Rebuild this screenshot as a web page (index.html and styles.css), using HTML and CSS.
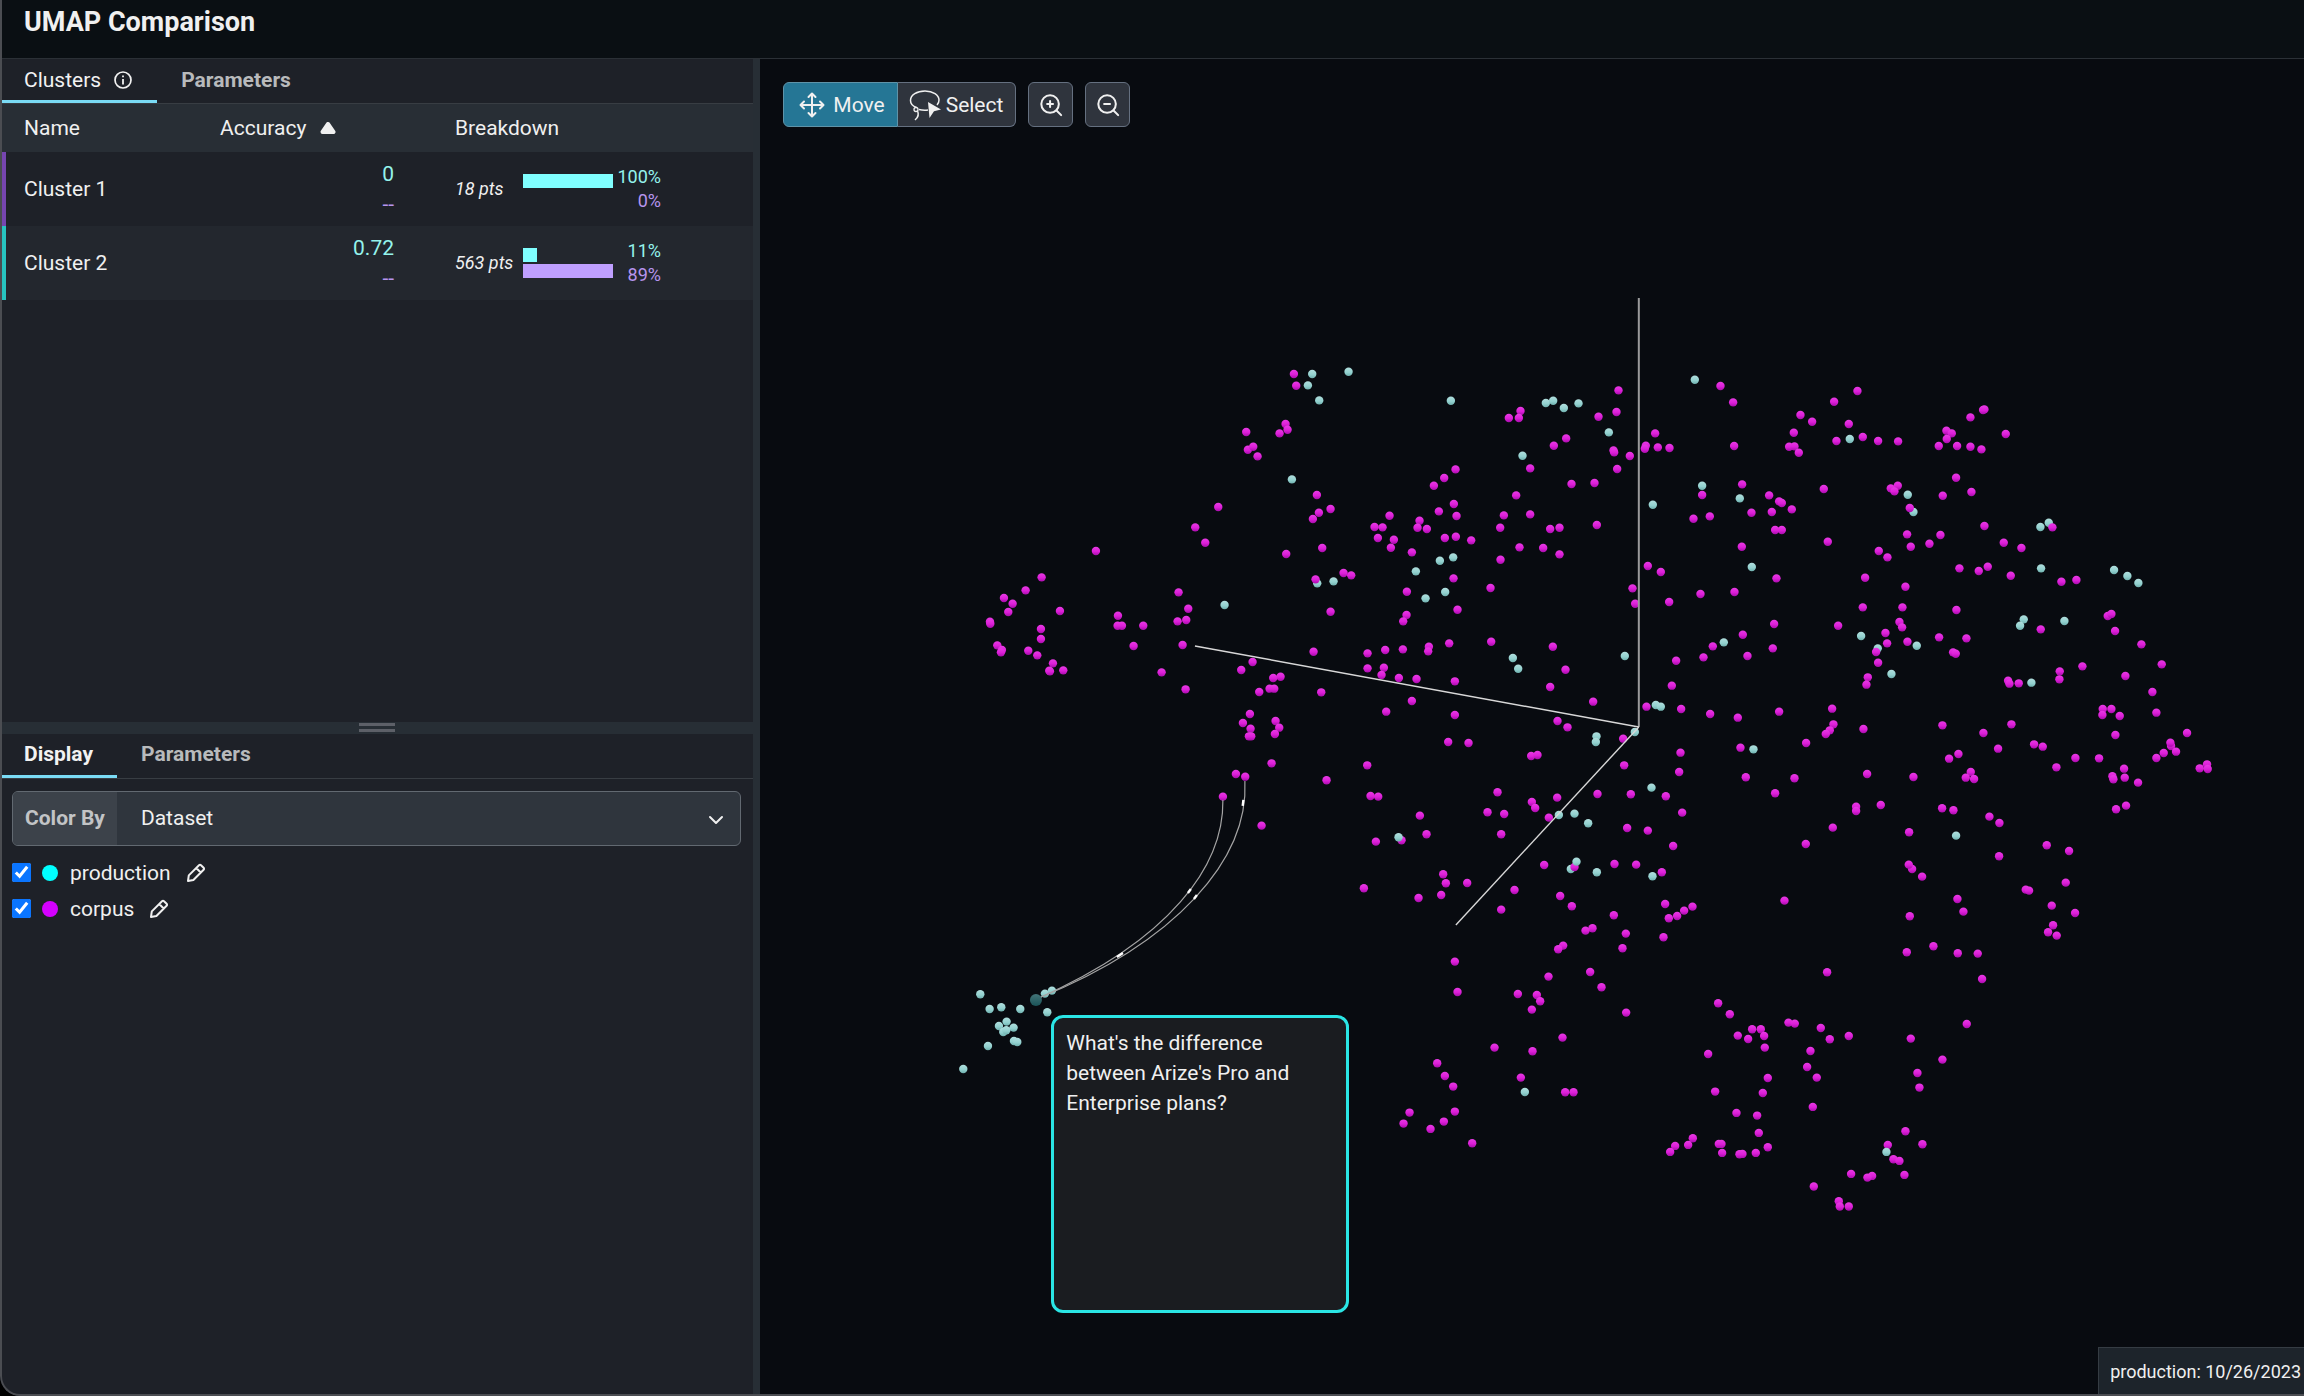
FILE: index.html
```html
<!DOCTYPE html>
<html lang="en">
<head>
<meta charset="utf-8">
<title>UMAP Comparison</title>
<link rel="stylesheet" href="styles.css">
</head>
<body>
<div class="app">
  <header class="header"><h1 class="title">UMAP Comparison</h1></header>
  <main class="main">
    <aside class="side">
      <section class="panel">
        <div class="tabs" role="tablist">
          <button class="tab tab-light tab-on" role="tab" aria-selected="true">Clusters
            <svg class="info" viewBox="0 0 20 20" aria-hidden="true"><circle cx="10" cy="10" r="8" fill="none" stroke="currentColor" stroke-width="1.7"/><path d="M10 9v5.4M10 5.4v1.9" stroke="currentColor" stroke-width="1.8"/></svg>
          </button>
          <button class="tab" role="tab" aria-selected="false">Parameters</button>
        </div>
        <table class="clusters">
          <colgroup><col class="col-name"><col class="col-acc"><col></colgroup>
          <thead>
            <tr>
              <th>Name</th>
              <th><span class="sort">Accuracy <svg class="caret" viewBox="0 0 16 12" aria-hidden="true"><path d="M8 2 13.500 10H2.500Z" fill="currentColor" stroke="currentColor" stroke-width="4" stroke-linejoin="round"/></svg></span></th>
              <th>Breakdown</th>
            </tr>
          </thead>
          <tbody>
            <tr class="row-purple">
              <td>Cluster 1</td>
              <td class="acc"><div class="prod">0</div><div class="corp">--</div></td>
              <td><div class="breakdown"><em class="pts">18 pts</em><div class="bars"><div class="bar bar-prod" style="width:100%"></div><div class="bar bar-corp" style="width:0%"></div></div><div class="pct"><div class="prod">100%</div><div class="corp">0%</div></div></div></td>
            </tr>
            <tr class="row-teal">
              <td>Cluster 2</td>
              <td class="acc"><div class="prod">0.72</div><div class="corp">--</div></td>
              <td><div class="breakdown"><em class="pts">563 pts</em><div class="bars"><div class="bar bar-prod" style="width:16%"></div><div class="bar bar-corp" style="width:100%"></div></div><div class="pct"><div class="prod">11%</div><div class="corp">89%</div></div></div></td>
            </tr>
          </tbody>
        </table>
      </section>
      <div class="splitter" role="separator"><span class="grip"></span></div>
      <section class="panel">
        <div class="tabs" role="tablist">
          <button class="tab tab-on" role="tab" aria-selected="true">Display</button>
          <button class="tab" role="tab" aria-selected="false">Parameters</button>
        </div>
        <div class="field">
          <label class="field-label" for="color-by">Color By</label>
          <select class="field-select" id="color-by"><option>Dataset</option></select>
          <svg class="chevron" viewBox="0 0 16 10" aria-hidden="true"><path d="m2 2 6 6 6-6" fill="none" stroke="currentColor" stroke-width="2" stroke-linecap="round" stroke-linejoin="round"/></svg>
        </div>
        <div class="legend">
          <div class="legend-item">
            <input class="check" type="checkbox" id="ds-prod" checked>
            <span class="swatch swatch-prod"></span>
            <label for="ds-prod">production</label>
            <button class="edit" aria-label="Edit production color"><svg viewBox="0 0 20 20"><path d="M2 18l.8-5.6L13 2.2c.6-.6 1.4-.6 2 0l2.600 2.600c.6.6.6 1.400 0 2L7.400 17zM10.200 5l4.800 4.800" fill="none" stroke="currentColor" stroke-width="2" stroke-linejoin="round"/></svg></button>
          </div>
          <div class="legend-item">
            <input class="check" type="checkbox" id="ds-corpus" checked>
            <span class="swatch swatch-corp"></span>
            <label for="ds-corpus">corpus</label>
            <button class="edit" aria-label="Edit corpus color"><svg viewBox="0 0 20 20"><path d="M2 18l.8-5.6L13 2.2c.6-.6 1.4-.6 2 0l2.600 2.600c.6.6.6 1.400 0 2L7.400 17zM10.200 5l4.800 4.800" fill="none" stroke="currentColor" stroke-width="2" stroke-linejoin="round"/></svg></button>
          </div>
        </div>
      </section>
    </aside>
    <section class="plot">
      <svg class="canvas" viewBox="760 59 1544 1337" role="img" aria-label="UMAP point cloud">
        <defs>
          <linearGradient id="g-corp" x1="0" y1="0" x2="0" y2="1"><stop offset="0" stop-color="#e83ae4"/><stop offset=".55" stop-color="#dc1fd8"/><stop offset="1" stop-color="#a80cab"/></linearGradient>
          <linearGradient id="g-prod" x1="0" y1="0" x2="0" y2="1"><stop offset="0" stop-color="#b0dedd"/><stop offset=".6" stop-color="#92d1cf"/><stop offset="1" stop-color="#6fb0ae"/></linearGradient>
          <linearGradient id="g-sel" x1="0" y1="0" x2="0" y2="1"><stop offset="0" stop-color="#447579"/><stop offset="1" stop-color="#1a5458"/></linearGradient>
        </defs>
        <g id="points"></g>
        <g class="axes">
          <path class="axis-y" d="M1639 298V727"/>
          <path d="M1195 646 1639 727"/>
          <path d="M1639 727 1456 925"/>
        </g>
        <g class="links">
          <path d="M1245 781C1249 860 1176 942 1039 998"/>
          <path d="M1223 800C1224 866 1170 940 1039 998"/>
        </g>
        <g class="arrows">
          <path d="M1243.500 800 1242.800 806M1191 889 1188 893M1197 895 1194 899M1123 953 1117 957"/>
        </g>
        <circle cx="1036" cy="1000" r="6" fill="url(#g-sel)"/>
      </svg>
      <div class="toolbar">
        <div class="modes">
          <button class="tool tool-on"><svg class="ico-move" viewBox="0 0 26 26" aria-hidden="true"><path d="M13 2v22M2 13h22M9.500 5 13 1.500 16.500 5M9.500 21l3.500 3.500 3.500-3.500M5 9.500 1.500 13 5 16.500M21 9.500l3.500 3.500-3.500 3.500" fill="none" stroke="currentColor" stroke-width="2" stroke-linecap="round" stroke-linejoin="round"/></svg>Move</button>
          <button class="tool"><svg class="ico-lasso" viewBox="0 0 32 32" aria-hidden="true"><path d="M7.500 18.500C3.500 17 1.500 14 1.500 11.500 1.500 6 8 2 16 2s14 4 14 9c0 2-.8 3.800-2 5M10 20.500c3 .8 6 1 9 .5" fill="none" stroke="currentColor" stroke-width="1.500"/><circle cx="7" cy="20.500" r="2" fill="none" stroke="currentColor" stroke-width="1.300"/><path d="M8.500 22c1.500 3 .5 6.500-2.500 9" fill="none" stroke="currentColor" stroke-width="1.500"/><path d="M19 13l13 7.500-7 1.800-4.500 6.700z" fill="currentColor"/></svg>Select</button>
        </div>
        <button class="tool-sq" aria-label="Zoom in"><svg viewBox="0 0 26 26"><circle cx="12" cy="12" r="9.500" fill="none" stroke="currentColor" stroke-width="2.200"/><path d="M19 19l5 5M12 8.800v6.400M8.800 12h6.400" stroke="currentColor" stroke-width="2.200" stroke-linecap="round"/></svg></button>
        <button class="tool-sq" aria-label="Zoom out"><svg viewBox="0 0 26 26"><circle cx="12" cy="12" r="9.500" fill="none" stroke="currentColor" stroke-width="2.200"/><path d="M19 19l5 5M8.800 12h6.400" stroke="currentColor" stroke-width="2.200" stroke-linecap="round"/></svg></button>
      </div>
      <div class="tooltip" role="tooltip">What's the difference between Arize's Pro and Enterprise plans?</div>
      <div class="stamp">production: 10/26/2023</div>
    </section>
  </main>
</div>
<script src="points.js"></script>
</body>
</html>
```
FILE: points.js
```js
// Projected points, grouped by tile. Each tile has an origin in scene units;
// its points are stored in thirds of a unit from that origin.
const tiles = [
  { origin: [940, 340],
    prod: "1117,102 1104,136 1138,181 1056,418 1132,730 854,795",
    corpus: "1062,102 1069,137 1037,252 1043,269 1019,280 919,276 924,329 940,320 953,349 1131,465 1137,518 1119,537 1172,507 835,501 766,562 796,608 468,633 1147,624 1039,642 305,712 257,751 192,774 218,791 205,816 150,845 151,851 360,813 303,867 303,897 172,916 186,930 183,937 265,932 292,946 339,970 328,992 330,994 370,991 534,827 533,857 546,857 610,857 581,918 716,757 745,806 739,840 713,844 728,915 665,997 737,1048 1127,718 1172,815 1121,935 938,966 904,990 1000,1014 1022,1010 958,1056 989,1046 1003,1046 1144,1057" },
  { origin: [1330, 340],
    prod: "56,95 363,182 648,189 670,182 702,204 746,190 837,277 578,347 370,652 330,662 258,694 346,756 287,775 11,724 1095,119 1117,437 1230,475 969,494 1266,681 1182,907 885,948 549,954 565,986 978,1095 993,1100 915,1176 800,1189 798,1206 1271,1228 965,1343 687,1425 734,1421 775,1450",
    corpus: "866,151 860,216 806,230 572,213 567,234 537,234 709,295 672,317 851,331 853,337 900,348 862,387 601,385 377,388 343,414 312,437 725,432 794,429 559,466 372,492 327,514 380,528 179,527 269,542 263,563 291,567 134,561 158,562 144,594 192,599 183,623 345,594 378,590 424,601 246,637 522,526 511,563 601,523 661,567 689,563 801,555 569,622 640,624 689,643 512,659 371,715 482,744 231,755 41,699 64,706 383,809 230,825 220,844 908,745 916,791 954,678 993,696 1018,786 1112,762 1214,756 1236,620 1117,465 1091,536 1140,529 1237,433 1265,518 976,280 948,317 945,326 984,322 1019,324 1213,318 1172,138 1210,187 358,910 484,905 297,920 295,934 166,930 219,928 113,940 113,985 162,983 155,1005 207,1014 260,1017 375,1024 669,920 707,989 661,1041 790,1085 246,1083 169,1115 375,1125 683,1143 713,1162 355,1206 416,1209 604,1248 623,1245 880,1196 883,1276 112,1276 122,1368 145,1370 270,1427 290,1483 503,1357 473,1417 523,1422 514,1483 606,1386 616,1404 657,1433 682,1373 803,1362 903,1363 1008,1369 892,1464 954,1472 1057,1418 1048,1296 1052,1238 950,1100 1054,1107 1141,1122 1224,1133 1232,1223 1248,1312 1239,884 1149,919 1121,952 1039,962 1026,1037 1253,948" },
  { origin: [1760, 340],
    prod: "270,297 444,464 461,516 842,561 867,548 844,685 1063,690 1103,708 1136,729 792,838 781,857 914,843 304,888 354,925 471,917 395,1002 815,1028 589,1487",
    corpus: "293,153 223,185 122,225 157,245 267,252 102,278 309,291 230,303 355,303 415,304 88,320 104,319 117,338 674,208 670,210 632,232 560,272 576,280 561,297 537,318 592,318 632,320 665,328 738,282 589,413 635,456 549,467 192,447 28,466 58,484 66,489 96,508 36,516 46,570 66,570 414,437 393,445 404,454 450,504 442,583 453,620 357,633 383,652 542,585 509,611 674,558 732,608 785,624 599,685 657,693 684,680 753,707 905,725 950,720 878,562 204,605 50,715 316,713 437,740 309,802 428,802 419,846 427,862 377,879 382,910 443,905 349,936 355,968 324,1012 320,1034 43,852 235,857 39,925 590,810 538,892 620,895 580,937 588,941 843,868 1044,828 1055,822 1066,873 1145,913 1206,973 1097,1008 1178,1056 1190,1118 968,979 900,994 899,1018 745,1022 749,1031 777,1030 1029,1107 1055,1107 1028,1125 1080,1128 1067,1185 1282,1179 1234,1218 1232,1208 1249,1235 1212,1239 1190,1254 1342,1273 1320,1285 1344,1287 58,1115 217,1106 221,1153 210,1171 198,1182 139,1209 311,1167 104,1315 46,1360 322,1302 461,1311 363,1395 289,1400 289,1413 219,1463 448,1477 548,1156 671,1179 755,1153 715,1226 596,1242 568,1256 633,1296 618,1313 643,1317 823,1213 849,1220 947,1254 890,1282 1018,1255 1093,1286 1058,1309 1061,1318 1095,1313 1135,1328 1099,1397 1069,1408 547,1405 581,1411 689,1430 719,1449" },
  { origin: [1160, 680],
    prod: "1233,567 1311,577 1478,589 1095,1236",
    corpus: "270,102 249,129 347,123 358,143 345,162 272,146 267,169 274,169 335,250 228,282 256,290 189,350 305,437 500,301 648,485 725,481 612,625 776,654 850,583 858,610 844,645 922,609 1064,630 1024,689 1153,555 1201,648 1236,679 1364,552 1429,554 1362,706 1298,745 1277,752 1398,761 1388,805 1210,797 1195,808 1291,876 1325,922 1166,890 1399,998 1074,942 1131,945 1141,964 1116,989 885,845 893,936 1208,1073 1118,1114 1004,1103 1083,1193 1216,1237 1241,1237 832,1150 855,1188 880,1220 885,1295 852,1325 812,1347 749,1298 731,1331 937,1390 1244,561",
    front: "1250,545 716,472" },
  { origin: [1660, 800],
    prod: "",
    corpus: "40,138 438,132 6,217 16,312 98,320 73,332 52,348 27,355 11,412 374,302 502,517 175,610 210,643 277,688 303,688 313,708 234,707 265,717 315,743 145,762 324,834 309,879 166,875 230,939 292,947 297,999 324,1042 288,1059 248,1062 239,1063 187,1059 177,1032 185,1032 99,1015 85,1035 46,1038 31,1056 386,668 405,671 483,684 567,708 510,718 452,753 442,801 471,833 459,921 757,207 747,194 787,230 750,349 741,457 821,439 894,460 954,461 967,537 893,297 911,335 921,672 753,716 848,779 773,819 779,863 1018,169 1161,136 1228,153 1218,248 1098,269 1108,272 1176,317 1246,339 1180,376 1165,397 1191,407 737,994 788,1033 684,1035 701,1078 719,1083 734,1125 574,1122 637,1128 623,1133 462,1160 537,1204 540,1220 567,1220",
    front: "680,1056" },
  { origin: [940, 980],
    prod: "121,43 149,87 184,82 241,87 315,41 336,32 322,97 200,125 177,138 221,143 190,156 199,151 144,198 222,183 232,186 70,267",
    corpus: "" }
];

const layer = document.getElementById("points");

function draw(list, origin, fill) {
  if (!list) return;
  for (const pair of list.split(" ")) {
    const [x, y] = pair.split(",").map(Number);
    const dot = document.createElementNS("http://www.w3.org/2000/svg", "circle");
    dot.setAttribute("cx", origin[0] + x / 3);
    dot.setAttribute("cy", origin[1] + y / 3);
    dot.setAttribute("r", 4.2);
    dot.setAttribute("fill", fill);
    layer.appendChild(dot);
  }
}

for (const t of tiles) draw(t.prod, t.origin, "url(#g-prod)");
for (const t of tiles) draw(t.corpus, t.origin, "url(#g-corp)");
for (const t of tiles) draw(t.front, t.origin, "url(#g-prod)");
```
FILE: styles.css
```css
* { box-sizing: border-box; }

body {
  margin: 0;
  background: #000;
  color: #f0f0f0;
  font-family: Roboto, "Liberation Sans", sans-serif;
  font-size: 21px;
  line-height: 24px;
}

button, select, input { font: inherit; color: inherit; margin: 0; }
button { background: none; border: 0; padding: 0; }
svg { display: block; flex: none; }

.app {
  position: relative;
  display: flex;
  flex-direction: column;
  min-height: 100vh;
  background: #080b10;
  border-bottom-left-radius: 20px;
  overflow: hidden;
}

/* window edge, drawn above the panels */
.app::after {
  content: "";
  position: absolute;
  inset: 0 -20px 0 0;
  border: solid #4b4d52;
  border-width: 0 0 2px 2px;
  border-bottom-left-radius: 20px;
  pointer-events: none;
}

.header {
  height: 59px;
  padding: 7px 24px;
  background: #0a0f13;
  border-bottom: 1px solid #2b3036;
}

.title { margin: 0; font-size: 27px; line-height: 30px; font-weight: 700; }

.main { flex: 1; display: flex; }

.side {
  width: 33%;
  display: flex;
  flex-direction: column;
  background: #1e2128;
  border-right: 7px solid #272e35;
}

.panel { flex: 1 1 0; }

.tabs { display: flex; height: 45px; border-bottom: 1px solid #383d43; }
.tab {
  display: flex;
  align-items: center;
  gap: 12px;
  height: 44px;
  padding: 0 24px;
  border-bottom: 3px solid transparent;
  font-weight: 700;
  color: #b8babc;
}
.tab-on { color: #f2f2f2; border-bottom-color: #7adbf5; }
.tab-light { font-weight: 400; }
.info { width: 20px; height: 20px; }

.clusters { width: 100%; border-collapse: separate; border-spacing: 0; table-layout: fixed; }
.col-name { width: 204px; }
.col-acc { width: 235px; }
.clusters th {
  height: 48px;
  padding: 0 16px;
  background: #282e35;
  font-weight: 400;
  text-align: left;
}
.clusters td { height: 74px; padding: 0 16px; }
.clusters th:first-child { padding-left: 24px; }
.clusters td:first-child { padding-left: 18px; border-left: 6px solid #7645b0; }
.clusters .row-teal td:first-child { border-left-color: #27c4c0; }
.row-teal { background: #23272e; }
.sort { display: flex; align-items: center; gap: 14px; }
.caret { width: 16px; height: 12px; }

.clusters .acc { padding-right: 45px; text-align: right; line-height: 30px; }
.prod { color: #95f3ec; }
.corp { color: #b795ee; }

.breakdown { display: flex; align-items: center; font-size: 18px; }
.pts { width: 68px; white-space: nowrap; }
.bars { width: 90px; display: flex; flex-direction: column; gap: 2px; }
.bar { height: 14px; }
.bar-prod { background: #80ffff; }
.bar-corp { background: #bf9fff; }
.pct { width: 48px; text-align: right; }

.splitter {
  display: flex;
  align-items: center;
  justify-content: center;
  height: 12px;
  background: #272e35;
}
.grip { width: 36px; height: 9px; border: solid #5d6068; border-width: 3px 0; }

.field {
  position: relative;
  display: flex;
  height: 55px;
  margin: 12px 12px 15px;
  border: 1px solid #626971;
  border-radius: 6px;
  background: #2f353d;
  overflow: hidden;
}
.field-label {
  display: flex;
  align-items: center;
  padding: 0 12px;
  background: #3c424a;
  color: #c2c4c6;
  font-weight: 700;
}
.field-select {
  flex: 1;
  appearance: none;
  padding: 0 24px;
  border: 0;
  background: transparent;
}
.chevron { position: absolute; right: 16px; top: 23px; width: 16px; height: 10px; }

.legend { display: flex; flex-direction: column; gap: 12px; padding: 0 12px; }
.legend-item { display: flex; align-items: center; height: 24px; }
.check { width: 19px; height: 19px; accent-color: #0a75ff; }
.swatch { width: 16px; height: 16px; margin: 0 12px 0 11px; border-radius: 50%; }
.swatch-prod { background: #00ffff; }
.swatch-corp { background: #d400ff; }
.edit { margin-left: 15px; }
.edit svg { width: 20px; height: 20px; }

.plot { position: relative; flex: 1; }
.canvas { position: absolute; inset: 0; width: 100%; height: 100%; }
.axes { fill: none; stroke: #d8d8d8; stroke-width: 1.4; }
.axis-y { stroke: #9a9a9c; stroke-width: 2; }
.links { fill: none; stroke: #a4a4a4; stroke-width: 1.2; }
.arrows { stroke: #fff; stroke-width: 2.4; }

.toolbar { position: relative; display: flex; gap: 12px; padding: 23px; }
.modes { display: flex; }
.tool {
  display: flex;
  align-items: center;
  gap: 8px;
  height: 45px;
  padding: 0 12px 0 15px;
  border: 1px solid #657080;
  border-radius: 0 6px 6px 0;
  background: #2f343d;
}
.tool + .tool { border-left-width: 0; padding-left: 11px; gap: 5px; }
.tool-on { border-radius: 6px 0 0 6px; background: #257695; border-color: #5f93a8; }
.ico-move { width: 26px; height: 26px; }
.ico-lasso { width: 32px; height: 32px; }
.tool-sq {
  display: grid;
  place-items: center;
  width: 45px;
  height: 45px;
  border: 1px solid #657080;
  border-radius: 6px;
  background: #2f343d;
}
.tool-sq svg { width: 24px; height: 24px; }

.tooltip {
  position: absolute;
  left: 291px;
  top: 956px;
  width: 298px;
  height: 298px;
  padding: 10px 12px;
  border: 3px solid #2ae5e5;
  border-radius: 12px;
  background: #1a1c20;
  line-height: 30px;
}

.stamp {
  position: absolute;
  right: 0;
  bottom: 0;
  height: 49px;
  padding: 12px 3px 12px 11px;
  border: solid #353c43;
  border-width: 1px 0 0 1px;
  background: #1d242b;
  font-size: 18px;
}
```
